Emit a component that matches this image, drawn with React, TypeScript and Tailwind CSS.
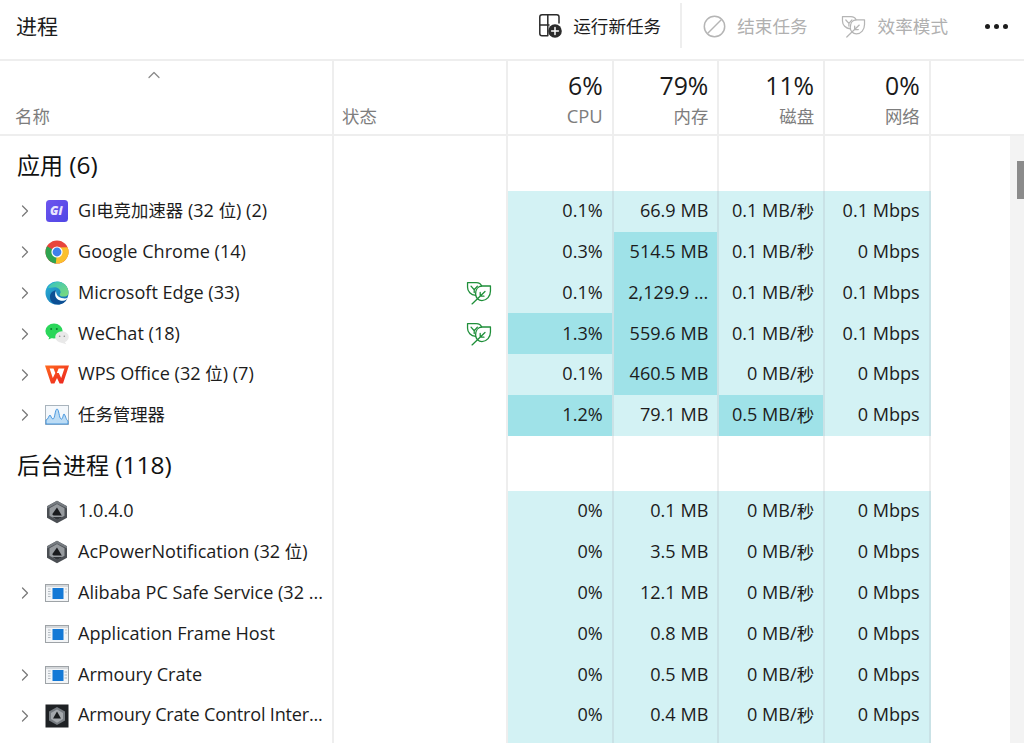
import React from "react";
import { ChevronRight, ChevronUp } from "lucide-react";

const LIGHT = "bg-[#d3f2f4]";
const DARK = "bg-[#9fe2e8]";

function T({ text, cjk = "text-[17.4px]" }: { text: string; cjk?: string }) {
  const parts = text.split(/([\u4e00-\u9fff]+)/);
  return (
    <>
      {parts.map((p, i) =>
        i % 2 === 1 ? (
          <span key={i} className={cjk}>
            {p}
          </span>
        ) : (
          <React.Fragment key={i}>{p}</React.Fragment>
        )
      )}
    </>
  );
}

function Leaf({ color, size = 26 }: { color: string; size?: number }) {
  return (
    <svg width={size} height={size * 0.92} viewBox="0 0 26 24" fill="none" stroke={color} strokeWidth="1.3" strokeLinejoin="round" strokeLinecap="round">
      <path d="M9.6 14.4 C4.8 14 1.5 10.5 1.5 6.2 V1.6 H10.2 C13 1.6 15 3 15.6 5" />
      <path d="M5 5.2 L8.2 8.8 M11.4 5.2 L8.2 8.8 V11.6" />
      <path d="M24.5 5 H16 C12 5 9.6 8.5 9.6 13 C9.6 17 12.5 19.6 16 19.6 C21 19.6 24.5 15.2 24.5 10 Z" />
      <path d="M6 23 L19 10.5 M14.2 15.2 V11.5 M14.2 15.2 H18" />
    </svg>
  );
}

function GiIcon() {
  return (
    <svg width="24" height="24" viewBox="0 0 24 24">
      <defs>
        <linearGradient id="giBg" x1="0" y1="0" x2="1" y2="1">
          <stop offset="0" stopColor="#6d55ee" />
          <stop offset="1" stopColor="#4f46e5" />
        </linearGradient>
      </defs>
      <rect x="1" y="1" width="22" height="22" rx="3.5" fill="url(#giBg)" />
      <text x="5" y="16" fill="#e9e6ff" fontSize="12" fontWeight="800" fontStyle="italic" fontFamily="Open Sans, sans-serif">Gi</text>
    </svg>
  );
}

function ChromeIcon() {
  return (
    <svg width="24" height="24" viewBox="0 0 24 24">
      <circle cx="12" cy="12" r="11.5" fill="#e8453c" />
      <path d="M12 12 L2 6.3 A11.5 11.5 0 0 0 11.2 23.5 L17 13.5 Z" fill="#2ea44f" />
      <path d="M12 12 L12 7.5 L22.5 7.2 A11.5 11.5 0 0 1 10.8 23.45 Z" fill="#fbc02d" />
      <circle cx="12" cy="12" r="5.6" fill="#fff" />
      <circle cx="12" cy="12" r="4.4" fill="#3f80ea" />
    </svg>
  );
}

function EdgeIcon() {
  return (
    <svg width="24" height="24" viewBox="0 0 24 24">
      <defs>
        <linearGradient id="edgeA" x1="0" y1="0" x2="1" y2="1">
          <stop offset="0" stopColor="#2bb4d8" />
          <stop offset="1" stopColor="#1266ae" />
        </linearGradient>
        <linearGradient id="edgeB" x1="0" y1="0" x2="1" y2="1">
          <stop offset="0" stopColor="#35c3c0" />
          <stop offset="1" stopColor="#7fdc78" />
        </linearGradient>
      </defs>
      <circle cx="12" cy="12" r="11.5" fill="url(#edgeA)" />
      <path d="M3 7 C6 1.5 11 .5 14 .7 C19.5 1.2 23.5 6 23.5 12 C23.5 14.5 21 15.8 18 15.6 C14.5 15.4 14 13.5 15.5 12 C16 9 13 6.2 9.5 6.3 C6.8 6.4 4.5 7 3 7 Z" fill="url(#edgeB)" />
      <path d="M10.2 13.5 C10.2 17 13.5 20 18 19.8 C20 19.7 21.5 18.8 22.5 17 C20.5 22 16 23.5 13 23.5 C8 23.5 4.8 20 5 15.5 C5.2 11.8 8 9.6 11 9.6 C11 10.5 10.2 11.5 10.2 13.5 Z" fill="#0c4f94" />
      <path d="M10.2 13.5 C10.2 17 13.5 20 18 19.8 C20 19.7 21.5 18.8 22.5 17 C21.5 17.5 19 17.7 16.5 17 C13 16 11 14 11 9.6 C11 10.5 10.2 11.5 10.2 13.5 Z" fill="#ffffff" />
    </svg>
  );
}

function WeChatIcon() {
  return (
    <svg width="24" height="22" viewBox="0 0 24 22">
      <ellipse cx="9" cy="8" rx="8.6" ry="7.4" fill="#2bd65a" />
      <path d="M4.5 13 L3.5 16.5 L8 14.5 Z" fill="#2bd65a" />
      <ellipse cx="17" cy="14" rx="6.8" ry="5.8" fill="#e9e9e9" />
      <path d="M19.5 18.5 L21.3 21.3 L15.5 19.5 Z" fill="#e9e9e9" />
      <circle cx="6.2" cy="6" r="1" fill="#0c7a30" />
      <circle cx="11.8" cy="6" r="1" fill="#0c7a30" />
      <circle cx="14.7" cy="13.2" r=".8" fill="#8d8d8d" />
      <circle cx="19.3" cy="13.2" r=".8" fill="#8d8d8d" />
    </svg>
  );
}

function WpsIcon() {
  return (
    <svg width="24" height="19" viewBox="0 0 24 19">
      <defs>
        <linearGradient id="wpsG" x1="0" y1="0" x2="1" y2="1">
          <stop offset="0" stopColor="#ff6a1f" />
          <stop offset="1" stopColor="#ea1f1f" />
        </linearGradient>
      </defs>
      <path
        fillRule="evenodd"
        d="M0 .5 H24 L18 18.5 H14.6 L12 13 L9.4 18.5 H6 Z M4.6 3.6 L7.8 13 L10.3 8 L8.5 3.6 Z M19.4 3.6 H13.6 L11.8 8 L13.7 8 L16.2 13 Z"
        fill="url(#wpsG)"
      />
    </svg>
  );
}

function TaskIcon() {
  return (
    <svg width="24" height="20" viewBox="0 0 24 20">
      <rect x=".5" y=".5" width="23" height="19" fill="#f4f8fc" stroke="#a9b4bd" />
      <path d="M1 18 V15 C3 15 4 10 5 10 C6 10 6 14 8 14 C10 14 10 4 12 4 C14 4 14 13 16 14 C18 15 18 9 19 9 C20 9 21 15 23 16 V19 H1 Z" fill="#bcdcf5" stroke="#3a8fdb" strokeWidth=".9" />
    </svg>
  );
}

function HexIcon() {
  return (
    <svg width="24" height="24" viewBox="0 0 24 24">
      <path d="M12 .8 L22 6.2 V17.8 L12 23.2 L2 17.8 V6.2 Z" fill="#4a4e53" />
      <path d="M12 .8 L22 6.2 V8.5 L12 3.5 L2 8.5 V6.2 Z" fill="#777c81" />
      <path d="M12 4 L19.5 8.2 V15.8 L12 20 L4.5 15.8 V8.2 Z" fill="#969a9e" />
      <path d="M12 7.5 L16.8 15.5 H8.5 L7.2 14.2 Z" fill="#1a1b1e" />
      <path d="M7.5 17 H17.5 L12 20 Z" fill="#33363a" />
    </svg>
  );
}

function WindowIcon({ small = false }: { small?: boolean }) {
  return (
    <svg width="24" height="18" viewBox="0 0 24 18">
      <rect x=".5" y=".5" width="23" height="17" fill="#f3f5f7" stroke="#9ea3a7" />
      <rect x="1" y="1" width="22" height="2" fill="#d5d8db" />
      <rect x="7.5" y="4" width="11" height="11" fill="#1479d6" />
      <path d="M3 5 H5.5 M3 7.5 H5.5 M3 10 H5.5 M3 12.5 H5.5" stroke="#b3bac0" strokeWidth="1" />
      {small ? <path d="M19.5 6 H22 M19.5 9 H22 M19.5 12 H22" stroke="#aeb4b9" strokeWidth="1" /> : <path d="M20 5 H22 M20 8 H22" stroke="#c5c9cc" strokeWidth="1" />}
    </svg>
  );
}

function ArmouryDark() {
  return (
    <svg width="24" height="24" viewBox="0 0 24 24">
      <rect x=".5" y=".5" width="23" height="23" fill="#1e2124" />
      <path d="M12 3 L20 7.5 V16.5 L12 21 L4 16.5 V7.5 Z" fill="#767b80" />
      <path d="M12 5.5 L18 9 V15 L12 18.8 L6 15 V9 Z" fill="#a4a8ac" />
      <path d="M12 7.5 L16 14.5 L8 14.5 Z" fill="#191b1d" />
    </svg>
  );
}

type RowData = {
  name: string;
  icon: React.ReactNode;
  expand: boolean;
  leaf?: boolean;
  tight?: boolean;
  cells: [string, string, string, string];
  dark?: [boolean, boolean, boolean, boolean];
};

const apps: RowData[] = [
  { name: "GI电竞加速器 (32 位) (2)", icon: <GiIcon />, expand: true, cells: ["0.1%", "66.9 MB", "0.1 MB/秒", "0.1 Mbps"] },
  { name: "Google Chrome (14)", icon: <ChromeIcon />, expand: true, cells: ["0.3%", "514.5 MB", "0.1 MB/秒", "0 Mbps"], dark: [false, true, false, false] },
  { name: "Microsoft Edge (33)", icon: <EdgeIcon />, expand: true, leaf: true, cells: ["0.1%", "2,129.9 ...", "0.1 MB/秒", "0.1 Mbps"], dark: [false, true, false, false] },
  { name: "WeChat (18)", icon: <WeChatIcon />, expand: true, leaf: true, cells: ["1.3%", "559.6 MB", "0.1 MB/秒", "0.1 Mbps"], dark: [true, true, false, false] },
  { name: "WPS Office (32 位) (7)", icon: <WpsIcon />, expand: true, cells: ["0.1%", "460.5 MB", "0 MB/秒", "0 Mbps"], dark: [false, true, false, false] },
  { name: "任务管理器", icon: <TaskIcon />, expand: true, cells: ["1.2%", "79.1 MB", "0.5 MB/秒", "0 Mbps"], dark: [true, false, true, false] },
];

const background: RowData[] = [
  { name: "1.0.4.0", icon: <HexIcon />, expand: false, cells: ["0%", "0.1 MB", "0 MB/秒", "0 Mbps"] },
  { name: "AcPowerNotification (32 位)", icon: <HexIcon />, expand: false, cells: ["0%", "3.5 MB", "0 MB/秒", "0 Mbps"] },
  { name: "Alibaba PC Safe Service (32 ...", icon: <WindowIcon />, expand: true, cells: ["0%", "12.1 MB", "0 MB/秒", "0 Mbps"] },
  { name: "Application Frame Host", icon: <WindowIcon />, expand: false, cells: ["0%", "0.8 MB", "0 MB/秒", "0 Mbps"] },
  { name: "Armoury Crate", icon: <WindowIcon small />, expand: true, cells: ["0%", "0.5 MB", "0 MB/秒", "0 Mbps"] },
  { name: "Armoury Crate Control Inter...", icon: <ArmouryDark />, expand: true, tight: true, cells: ["0%", "0.4 MB", "0 MB/秒", "0 Mbps"] },
  { name: "", icon: null, expand: false, cells: ["", "", "", ""] },
];

function Row({ row }: { row: RowData }) {
  return (
    <div className="flex h-[40.8px] shrink-0 text-[18.1px] text-[#1c1c1c]">
      <div className="flex w-[334px] shrink-0 items-center border-r-2 border-[#eeeeee]">
        <div className="flex w-[44px] shrink-0 justify-center pl-[6px] text-[#7a7a7a]">
          {row.expand && <ChevronRight size={20} strokeWidth={1.5} />}
        </div>
        <div className="flex w-[26px] shrink-0 justify-center">{row.icon}</div>
        <div className={`ml-[8px] pb-[1.4px] whitespace-nowrap ${row.tight ? "tracking-[-0.2px]" : ""}`}>
          <T text={row.name} />
        </div>
      </div>
      <div className="flex w-[174px] shrink-0 items-center justify-end border-r-2 border-[#eeeeee] pr-[14px]">
        {row.leaf && <Leaf color="#1f8f3a" />}
      </div>
      {row.cells.map((c, i) => (
        <div
          key={i}
          className={`flex w-[105.7px] shrink-0 items-center justify-end border-r-2 border-[#c9e2e6] pr-[9px] pb-[1.4px] whitespace-nowrap ${row.dark?.[i] ? DARK : LIGHT}`}
        >
          <T text={c} />
        </div>
      ))}
    </div>
  );
}

function Section({ title, height }: { title: string; height: string }) {
  return (
    <div className={`flex shrink-0 ${height}`}>
      <div className="flex w-[334px] shrink-0 items-end border-r-2 border-[#eeeeee] pb-[14px] pl-[17px] text-[24.5px] leading-none text-[#111111]">
        <span>
          <T text={title} cjk="text-[23px]" />
        </span>
      </div>
      <div className="w-[174px] shrink-0 border-r-2 border-[#eeeeee]" />
      <div className="w-[105.7px] shrink-0 border-r-2 border-[#eeeeee]" />
      <div className="w-[105.7px] shrink-0 border-r-2 border-[#eeeeee]" />
      <div className="w-[105.7px] shrink-0 border-r-2 border-[#eeeeee]" />
      <div className="w-[105.7px] shrink-0 border-r-2 border-[#eeeeee]" />
    </div>
  );
}

function HeadCol({ pct, label }: { pct: string; label: string }) {
  return (
    <div className="flex w-[105.7px] shrink-0 flex-col items-end border-r-2 border-[#eeeeee] pr-[9px]">
      <div className="mt-[9px] text-[24.8px] leading-[30px] text-[#1a1a1a]">{pct}</div>
      <div className="mt-[3px] text-[18.4px] leading-[26px] text-[#7d7d7d]">
        <T text={label} />
      </div>
    </div>
  );
}

export default function App() {
  return (
    <div className="flex h-[743px] w-[1024px] flex-col overflow-hidden bg-white font-['Open_Sans','Noto_Sans_CJK_SC',sans-serif]">
      <div className="flex h-[61px] shrink-0 items-start border-b-2 border-[#eeeeee]">
        <div className="mt-[11px] ml-[16px] text-[21px] leading-[30px] text-[#1c1c1c]">进程</div>
        <div className="ml-auto flex items-start">
          <div className="mt-[14px] flex items-center">
            <svg width="23" height="24" viewBox="0 0 23 24" fill="none" stroke="#2b2b2b" strokeWidth="1.5" strokeLinecap="round" strokeLinejoin="round">
              <path d="M20 9 V3 Q20 .8 17.8 .8 H3 Q.8 .8 .8 3 V19.5 Q.8 21.8 3 21.8 H8.8 V.8 M.8 11 H10" />
              <circle cx="16" cy="17" r="6.8" fill="#2b2b2b" stroke="none" />
              <path d="M16 13.6 V20.4 M12.6 17 H19.4" stroke="#fff" />
            </svg>
            <span className="ml-[11px] text-[17.6px] leading-[24px] text-[#1c1c1c]">运行新任务</span>
          </div>
          <div className="mt-[3px] ml-[19px] h-[45px] w-[2px] bg-[#eeeeee]" />
          <div className="mt-[14px] ml-[21px] flex items-center">
            <svg width="23" height="23" viewBox="0 0 23 23" fill="none" stroke="#b5b5b5" strokeWidth="1.5">
              <circle cx="11.5" cy="11.5" r="10.2" />
              <path d="M4.5 18.5 L18.5 4.5" />
            </svg>
            <span className="ml-[11px] text-[17.6px] leading-[24px] text-[#b0b0b0]">结束任务</span>
          </div>
          <div className="mt-[14px] ml-[33px] flex items-center">
            <Leaf color="#b5b5b5" size={25} />
            <span className="ml-[12px] text-[17.6px] leading-[24px] text-[#b0b0b0]">效率模式</span>
          </div>
          <div className="mt-[24px] mr-[16px] ml-[37px] flex gap-[4px]">
            <div className="h-[5px] w-[5px] rounded-full bg-[#1c1c1c]" />
            <div className="h-[5px] w-[5px] rounded-full bg-[#1c1c1c]" />
            <div className="h-[5px] w-[5px] rounded-full bg-[#1c1c1c]" />
          </div>
        </div>
      </div>
      <div className="flex h-[75px] shrink-0 border-b-2 border-[#eeeeee]">
        <div className="flex w-[334px] shrink-0 flex-col border-r-2 border-[#eeeeee]">
          <div className="mt-[4px] flex justify-center pr-[24px] text-[#8a8a8a]">
            <ChevronUp size={20} strokeWidth={1.5} />
          </div>
          <div className="mt-[18px] pl-[15px] text-[17.4px] leading-[26px] text-[#7d7d7d]">名称</div>
        </div>
        <div className="flex w-[174px] shrink-0 flex-col justify-start border-r-2 border-[#eeeeee] pt-[42px] pl-[8px]">
          <div className="text-[17.4px] leading-[26px] text-[#7d7d7d]">状态</div>
        </div>
        <HeadCol pct="6%" label="CPU" />
        <HeadCol pct="79%" label="内存" />
        <HeadCol pct="11%" label="磁盘" />
        <HeadCol pct="0%" label="网络" />
      </div>
      <div className="flex min-h-0 flex-1">
        <div className="flex min-w-0 flex-1 flex-col">
          <Section title="应用 (6)" height="h-[55px]" />
          {apps.map((r) => (
            <Row key={r.name} row={r} />
          ))}
          <Section title="后台进程 (118)" height="h-[55.5px]" />
          {background.map((r, i) => (
            <Row key={i} row={r} />
          ))}
        </div>
        <div className="w-[14px] shrink-0 bg-[#f3f3f3] pt-[25px] pl-[7px]">
          <div className="h-[38px] w-[7px] bg-[#8b8b8b]" />
        </div>
      </div>
    </div>
  );
}
